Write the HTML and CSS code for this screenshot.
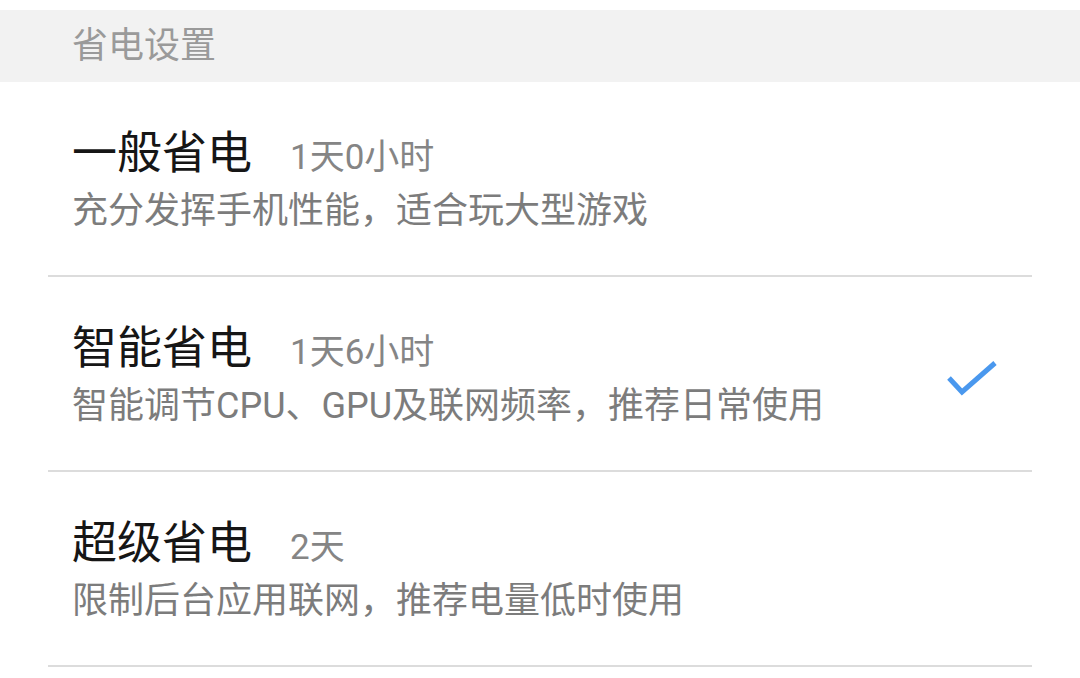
FILE: index.html
```html
<!DOCTYPE html>
<html lang="zh-CN">
<head>
<meta charset="utf-8">
<title>省电设置</title>
<link rel="stylesheet" href="styles.css">
</head>
<body>
<div class="page">
  <div class="section-header">省电设置</div>
  <ul class="mode-list">
    <li class="mode">
      <div class="mode-text">
        <div class="mode-title-row"><span class="mode-title">一般省电</span><span class="mode-time">1天0小时</span></div>
        <div class="mode-desc">充分发挥手机性能，适合玩大型游戏</div>
      </div>
    </li>
    <li class="mode selected">
      <div class="mode-text">
        <div class="mode-title-row"><span class="mode-title">智能省电</span><span class="mode-time">1天6小时</span></div>
        <div class="mode-desc">智能调节CPU、GPU及联网频率，推荐日常使用</div>
      </div>
      <svg class="check" width="54" height="40" viewBox="0 0 54 40" aria-hidden="true">
        <polyline points="3,18 16,32 49,3" fill="none" stroke="#4a98ee" stroke-width="5"/>
      </svg>
    </li>
    <li class="mode">
      <div class="mode-text">
        <div class="mode-title-row"><span class="mode-title">超级省电</span><span class="mode-time">2天</span></div>
        <div class="mode-desc">限制后台应用联网，推荐电量低时使用</div>
      </div>
    </li>
  </ul>
</div>
</body>
</html>
```
FILE: styles.css
```css
html, body {
  margin: 0;
  padding: 0;
  background: #ffffff;
}
body {
  font-family: Roboto, "Noto Sans CJK SC", sans-serif;
}
.page {
  padding-top: 10px;
}
.section-header {
  background: #f2f2f2;
  height: 72px;
  display: flex;
  align-items: center;
  padding-left: 72px;
  font-size: 36px;
  line-height: 1;
  color: #9a9a9a;
}
.mode-list {
  list-style: none;
  margin: 0 48px;
  padding: 0;
}
.mode {
  display: flex;
  align-items: center;
  justify-content: space-between;
  border-bottom: 2px solid #dcdcdc;
  padding: 50px 32px 46px 24px;
}
.mode-text {
  display: flex;
  flex-direction: column;
  gap: 17px;
}
.mode-title-row {
  display: flex;
  align-items: baseline;
}
.mode-title {
  font-size: 45px;
  line-height: 44px;
  color: #161616;
}
.mode-time {
  font-size: 35px;
  line-height: 34px;
  color: #858585;
  margin-left: 38px;
}
.mode-desc {
  font-size: 36px;
  line-height: 36px;
  color: #7c7c7c;
}
.check {
  display: block;
  margin-top: 8px;
}
```
